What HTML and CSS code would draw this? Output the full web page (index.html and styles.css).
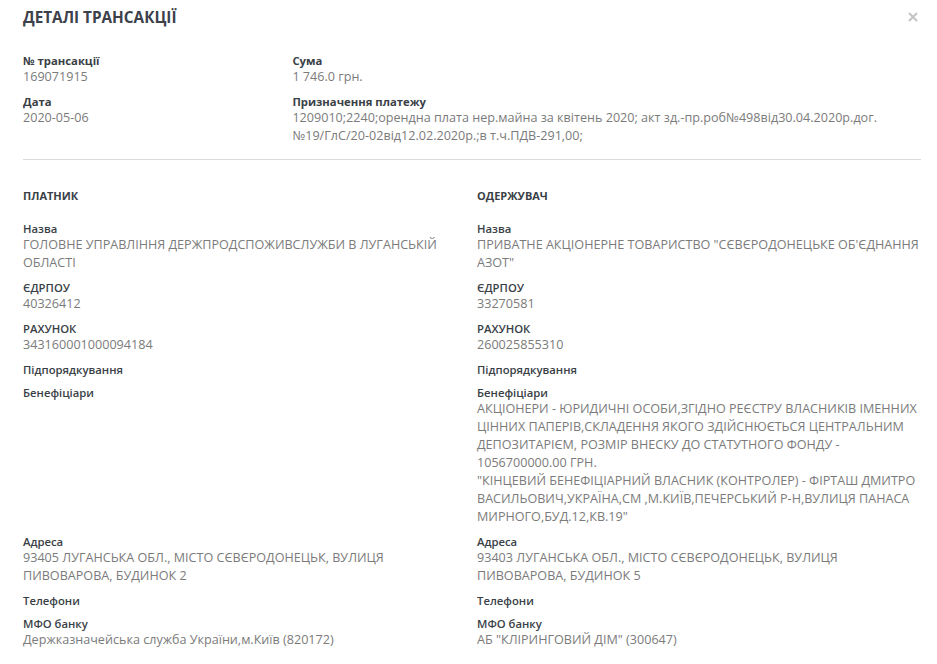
FILE: index.html
```html
<!DOCTYPE html>
<html lang="uk">
<head>
<meta charset="utf-8">
<title>Деталі трансакції</title>
<link rel="stylesheet" href="styles.css">
</head>
<body>
<div class="modal">
  <div class="header">
    <h1 class="title">ДЕТАЛІ ТРАНСАКЦІЇ</h1>
    <button class="close" aria-label="Закрити">
      <svg width="10" height="10" viewBox="0 0 10 10"><path d="M1 1L9 9M9 1L1 9" stroke="#c4c4c4" stroke-width="2"/></svg>
    </button>
  </div>

  <div class="summary">
    <div class="col">
      <div class="field">
        <div class="slabel">№ трансакції</div>
        <div class="value">169071915</div>
      </div>
      <div class="field">
        <div class="slabel">Дата</div>
        <div class="value">2020-05-06</div>
      </div>
    </div>
    <div class="col">
      <div class="field">
        <div class="slabel">Сума</div>
        <div class="value">1 746.0 грн.</div>
      </div>
      <div class="field">
        <div class="slabel">Призначення платежу</div>
        <div class="value">1209010;2240;орендна плата нер.майна за квітень 2020; акт зд.-пр.роб№498від30.04.2020р.дог. <span class="nowrap">№19/ГлС/20-02від12.02.2020р.;в</span> т.ч.ПДВ-291,00;</div>
      </div>
    </div>
  </div>

  <hr class="sep">

  <div class="parties">
    <div class="head">ПЛАТНИК</div>
    <div class="head">ОДЕРЖУВАЧ</div>

    <div class="field">
      <div class="label">Назва</div>
      <div class="value">ГОЛОВНЕ УПРАВЛІННЯ ДЕРЖПРОДСПОЖИВСЛУЖБИ В ЛУГАНСЬКІЙ ОБЛАСТІ</div>
    </div>
    <div class="field">
      <div class="label">Назва</div>
      <div class="value">ПРИВАТНЕ АКЦІОНЕРНЕ ТОВАРИСТВО "СЄВЄРОДОНЕЦЬКЕ ОБ'ЄДНАННЯ АЗОТ"</div>
    </div>

    <div class="field">
      <div class="label">ЄДРПОУ</div>
      <div class="value">40326412</div>
    </div>
    <div class="field">
      <div class="label">ЄДРПОУ</div>
      <div class="value">33270581</div>
    </div>

    <div class="field">
      <div class="label">РАХУНОК</div>
      <div class="value">343160001000094184</div>
    </div>
    <div class="field">
      <div class="label">РАХУНОК</div>
      <div class="value">260025855310</div>
    </div>

    <div class="field">
      <div class="label">Підпорядкування</div>
    </div>
    <div class="field">
      <div class="label">Підпорядкування</div>
    </div>

    <div class="field">
      <div class="label">Бенефіціари</div>
    </div>
    <div class="field">
      <div class="label">Бенефіціари</div>
      <div class="value">АКЦІОНЕРИ - ЮРИДИЧНІ ОСОБИ,ЗГІДНО РЕЄСТРУ ВЛАСНИКІВ ІМЕННИХ ЦІННИХ ПАПЕРІВ,СКЛАДЕННЯ ЯКОГО ЗДІЙСНЮЄТЬСЯ ЦЕНТРАЛЬНИМ ДЕПОЗИТАРІЄМ, РОЗМІР ВНЕСКУ ДО СТАТУТНОГО ФОНДУ - 1056700000.00 ГРН.<br>"КІНЦЕВИЙ БЕНЕФІЦІАРНИЙ ВЛАСНИК (КОНТРОЛЕР) - ФІРТАШ ДМИТРО ВАСИЛЬОВИЧ,УКРАЇНА,СМ ,М.КИЇВ,ПЕЧЕРСЬКИЙ Р-Н,ВУЛИЦЯ ПАНАСА МИРНОГО,БУД.12,КВ.19"</div>
    </div>

    <div class="field">
      <div class="label">Адреса</div>
      <div class="value">93405 ЛУГАНСЬКА ОБЛ., МІСТО СЄВЄРОДОНЕЦЬК, ВУЛИЦЯ ПИВОВАРОВА, БУДИНОК 2</div>
    </div>
    <div class="field">
      <div class="label">Адреса</div>
      <div class="value">93403 ЛУГАНСЬКА ОБЛ., МІСТО СЄВЄРОДОНЕЦЬК, ВУЛИЦЯ ПИВОВАРОВА, БУДИНОК 5</div>
    </div>

    <div class="field">
      <div class="label">Телефони</div>
    </div>
    <div class="field">
      <div class="label">Телефони</div>
    </div>

    <div class="field">
      <div class="label">МФО банку</div>
      <div class="value">Держказначейська служба України,м.Київ (820172)</div>
    </div>
    <div class="field">
      <div class="label">МФО банку</div>
      <div class="value">АБ "КЛІРИНГОВИЙ ДІМ" (300647)</div>
    </div>
  </div>
</div>
</body>
</html>
```

FILE: styles.css
```css
* { box-sizing: border-box; }

html, body {
  margin: 0;
  padding: 0;
  background: #ffffff;
}

body {
  font-family: "Open Sans", "Noto Sans", sans-serif;
  color: #3a3f47;
}

.modal {
  padding: 0 16px 0 23px;
  width: 937px;
}

.header {
  display: flex;
  justify-content: space-between;
  align-items: center;
  height: 33px;
}

.title {
  margin: 0;
  font-size: 15.3px;
  font-weight: 700;
  color: #3c414b;
}

.close {
  border: 0;
  background: transparent;
  padding: 0;
  margin-right: 1px;
  width: 14px;
  height: 14px;
  display: flex;
  align-items: center;
  justify-content: center;
}

.summary {
  display: grid;
  grid-template-columns: 30% 70%;
  margin-top: 20px;
  width: 898px;
}

.col {
  display: flex;
  flex-direction: column;
  gap: 8px;
}

.slabel {
  font-size: 11.3px;
  font-weight: 700;
  line-height: 15px;
  color: #3a3f47;
}

.label {
  font-size: 11.3px;
  font-weight: 600;
  line-height: 15px;
  color: #3a3f47;
}

.value {
  font-size: 12.6px;
  line-height: 18px;
  color: #7b7b7b;
}

.nowrap {
  white-space: nowrap;
}

.sep {
  width: 898px;
  margin: 14px 0 0 0;
  border: 0;
  border-top: 1px solid #dcdcdc;
  height: 0;
}

.parties {
  display: grid;
  grid-template-columns: 1fr 1fr;
  column-gap: 10px;
  row-gap: 8px;
  width: 898px;
  margin-top: 28px;
}

.head {
  font-size: 11px;
  font-weight: 700;
  line-height: 15px;
  color: #3a3f47;
  margin-bottom: 10px;
}
```
